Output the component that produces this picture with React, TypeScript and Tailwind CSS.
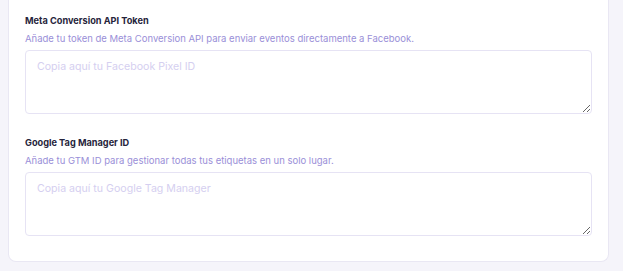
import React from 'react';

interface FieldProps {
  label: string;
  description: string;
  placeholder: string;
  className?: string;
}

const Field = ({ label, description, placeholder, className = '' }: FieldProps) => (
  <div className={className}>
    <label className="block text-[9.2px] leading-4 font-bold text-[#26243b]">{label}</label>
    <p className="mt-0.5 text-[9.5px] leading-4 text-[#9a8fd8]">{description}</p>
    <textarea
      placeholder={placeholder}
      className="mt-[3px] block h-16 w-full rounded border border-[#e6e3f4] bg-white px-[11px] pt-2 text-[10.6px] leading-4 text-[#26243b] placeholder:text-[#d5cff0] outline-none"
    />
  </div>
);

const App = () => {
  return (
    <div className="min-h-[271px] bg-[#f5f4fa] pl-2 pr-[14px] pb-[9px]" style={{ fontFamily: 'Inter, "Noto Sans", sans-serif' }}>
      <div className="rounded-b-lg border border-t-0 border-[#e9e7f3] bg-white px-4 pt-[13px] pb-[25px]">
        <Field
          label="Meta Conversion API Token"
          description="Añade tu token de Meta Conversion API para enviar eventos directamente a Facebook."
          placeholder="Copia aquí tu Facebook Pixel ID"
        />
        <Field
          className="mt-[21px]"
          label="Google Tag Manager ID"
          description="Añade tu GTM ID para gestionar todas tus etiquetas en un solo lugar."
          placeholder="Copia aquí tu Google Tag Manager"
        />
      </div>
    </div>
  );
};

export default App;
